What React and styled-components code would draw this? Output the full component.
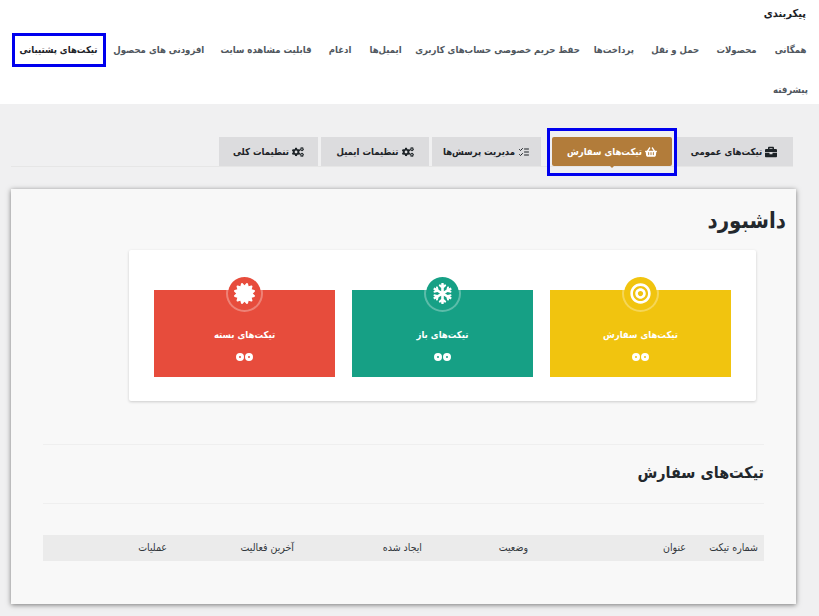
import React from 'react'
import styled, { createGlobalStyle } from 'styled-components'
import { FaBriefcase, FaShoppingBasket, FaCogs, FaBullseye, FaSnowflake, FaCertificate } from 'react-icons/fa'
import { LuListChecks } from 'react-icons/lu'

const GlobalStyle = createGlobalStyle`
  html, body {
    margin: 0;
    height: 616px;
    overflow: hidden;
    background: #f0f0f1;
  }
  body {
    font-family: "DejaVu Sans Condensed", "DejaVu Sans", sans-serif;
    font-stretch: condensed;
    direction: rtl;
  }
  * {
    box-sizing: border-box;
  }
`

const Header = styled.header`
  height: 104px;
  background: #fff;
  padding: 6px 4px 0 0;
`

const PageTitle = styled.h1`
  margin: 0 9px 0 0;
  font-size: 11px;
  line-height: 15px;
  font-weight: 700;
  color: #1d2327;
`

const NavList = styled.nav`
  display: flex;
  flex-wrap: wrap;
  align-items: center;
  margin-top: 12px;
  row-gap: 6px;
`

const NavItem = styled.a`
  display: flex;
  align-items: center;
  justify-content: center;
  height: 34px;
  width: ${props => props.$width}px;
  padding-bottom: 2px;
  font-size: 9.5px;
  font-weight: ${props => (props.$active ? 700 : 600)};
  color: ${props => (props.$active ? '#1d2327' : '#50575e')};
  white-space: nowrap;
  border: ${props => (props.$active ? '3px solid #0000ee' : 'none')};
`

const TabBar = styled.div`
  display: flex;
  gap: 3px;
  height: 30px;
  margin: 33px 26px 22px 11px;
  align-items: flex-start;
  border-bottom: 1px solid #e6e6e6;
`

const Tab = styled.a`
  position: relative;
  display: flex;
  align-items: center;
  justify-content: center;
  gap: 3px;
  height: 29px;
  width: ${props => props.$width}px;
  background: ${props => (props.$active ? '#b27c3a' : '#dcdcde')};
  color: ${props => (props.$active ? '#fff' : '#1d2327')};
  font-size: 9.5px;
  font-weight: 700;
  white-space: nowrap;
  border-radius: ${props => (props.$active ? '2px' : '0')};
  margin-left: ${props => (props.$active ? '8px' : '0')};

  svg {
    width: 12px;
    height: 12px;
  }

  ${props =>
    props.$active &&
    `
    &::before {
      content: '';
      position: absolute;
      bottom: -2px;
      left: 50%;
      margin-left: -2px;
      border-top: 2px solid #b27c3a;
      border-left: 2px solid transparent;
      border-right: 2px solid transparent;
    }
    &::after {
      content: '';
      position: absolute;
      inset: -9px -5px -10px -5px;
      border: 3px solid #0000ee;
    }
  `}
`

const Panel = styled.main`
  margin: 0 23px 0 11px;
  height: 415px;
  background: #f8f8f8;
  box-shadow: 0 1px 5px rgba(0, 0, 0, 0.5);
  padding: 16px 32px 0;
`

const Heading = styled.h2`
  margin: 0 -22px 0 0;
  font-size: 22px;
  line-height: 32px;
  font-weight: 700;
  color: #23282d;
`

const Summary = styled.section`
  display: grid;
  grid-template-columns: repeat(3, 181px);
  justify-content: space-between;
  margin: 13px 8px 0 86px;
  height: 151px;
  padding: 40px 25px 0;
  background: #fff;
  box-shadow: 0 1px 3px rgba(0, 0, 0, 0.18);
  border-radius: 2px;
`

const StatCard = styled.div`
  position: relative;
  height: 87px;
  background: ${props => props.$color};
  color: #fff;
  text-align: center;
  padding-top: 37px;
  font-size: 9.5px;
  font-weight: 600;
`

const StatIcon = styled.span`
  position: absolute;
  top: -15px;
  left: 50%;
  margin-left: -18.5px;
  width: 37px;
  height: 37px;
  display: flex;
  align-items: center;
  justify-content: center;
  border-radius: 50%;
  background: ${props => props.$color};
  border: 2px solid rgba(255, 255, 255, 0.3);
  background-clip: padding-box;

  svg {
    width: 21px;
    height: 21px;
  }
`

const StatLabel = styled.div`
  line-height: 16px;
`

const Dots = styled.div`
  display: flex;
  justify-content: center;
  gap: 1px;
  margin-top: 10px;
`

const Dot = styled.i`
  display: block;
  width: 8px;
  height: 8px;
  border-radius: 50%;
  border: 3px solid #fff;
`

const Rule = styled.hr`
  margin: ${props => props.$top}px 0 0;
  border: 0;
  border-top: 1px solid #efefef;
`

const SectionTitle = styled.h3`
  margin: 14px 0 0;
  font-size: 16px;
  line-height: 28px;
  font-weight: 700;
  color: #23282d;
`

const TableHead = styled.div`
  display: grid;
  grid-template-columns: 72px 158px 106px 128px 127px 1fr;
  align-items: center;
  height: 26px;
  margin-top: 31px;
  padding: 0 6px 3px 0;
  background: #ebebeb;
  font-size: 10.5px;
  color: #32373c;
`

const tabs = [
  { label: 'تیکت‌های عمومی', icon: <FaBriefcase />, width: 118 },
  { label: 'تیکت‌های سفارش', icon: <FaShoppingBasket />, width: 120, active: true },
  { label: 'مدیریت پرسش‌ها', icon: <LuListChecks />, width: 109 },
  { label: 'تنظیمات ایمیل', icon: <FaCogs />, width: 108 },
  { label: 'تنظیمات کلی', icon: <FaCogs />, width: 99 },
]

const navItems = [
  { label: 'همگانی', width: 49 },
  { label: 'محصولات', width: 59 },
  { label: 'حمل و نقل', width: 63.5 },
  { label: 'پرداخت‌ها', width: 59.5 },
  { label: 'حفظ حریم خصوصی حساب‌های کاربری', width: 173 },
  { label: 'ایمیل‌ها', width: 51 },
  { label: 'ادغام', width: 40 },
  { label: 'قابلیت مشاهده سایت', width: 108 },
  { label: 'افزودنی های محصول', width: 106.5 },
  { label: 'تیکت‌های پشتیبانی', width: 94, active: true },
  { label: 'پیشرفته', width: 49 },
]

const stats = [
  { label: 'تیکت‌های سفارش', color: '#f1c40f', icon: <FaBullseye /> },
  { label: 'تیکت‌های باز', color: '#16a085', icon: <FaSnowflake /> },
  { label: 'تیکت‌های بسته', color: '#e74c3c', icon: <FaCertificate /> },
]

const columns = ['شماره تیکت', 'عنوان', 'وضعیت', 'ایجاد شده', 'آخرین فعالیت', 'عملیات']

const App = () => (
  <>
    <GlobalStyle />
    <Header>
      <PageTitle>پیکربندی</PageTitle>
      <NavList>
        {navItems.map(item => (
          <NavItem key={item.label} $width={item.width} $active={item.active}>
            {item.label}
          </NavItem>
        ))}
      </NavList>
    </Header>
    <TabBar>
      {tabs.map(tab => (
        <Tab key={tab.label} $width={tab.width} $active={tab.active}>
          {tab.icon}
          {tab.label}
        </Tab>
      ))}
    </TabBar>
    <Panel>
      <Heading>داشبورد</Heading>
      <Summary>
        {stats.map(stat => (
          <StatCard key={stat.label} $color={stat.color}>
            <StatIcon $color={stat.color}>{stat.icon}</StatIcon>
            <StatLabel>{stat.label}</StatLabel>
            <Dots>
              <Dot />
              <Dot />
            </Dots>
          </StatCard>
        ))}
      </Summary>
      <Rule $top={43} />
      <SectionTitle>تیکت‌های سفارش</SectionTitle>
      <Rule $top={16} />
      <TableHead>
        {columns.map(col => (
          <span key={col}>{col}</span>
        ))}
      </TableHead>
    </Panel>
  </>
)

export default App
